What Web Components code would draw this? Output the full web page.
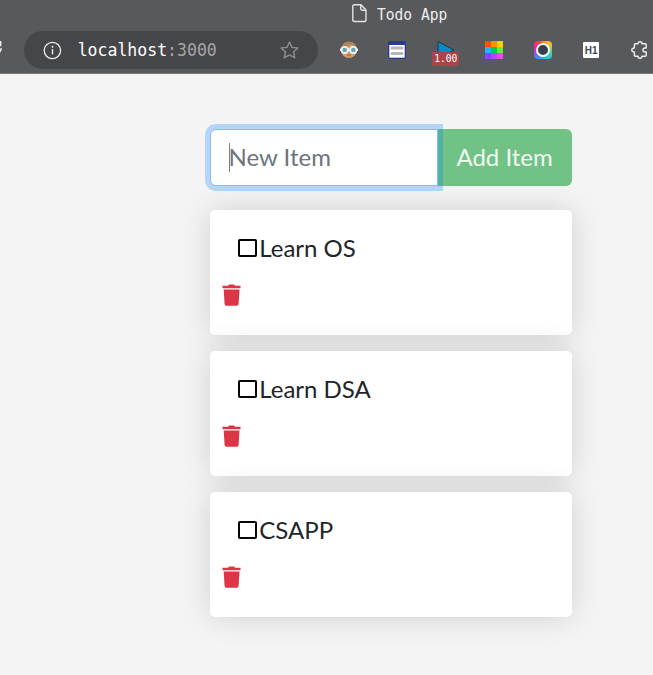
<!DOCTYPE html>
<html lang="en"><head><meta charset="utf-8"><title>Todo App</title>
<style>body{margin:0;background:#f4f4f4;width:653px;height:675px;overflow:hidden;font-family:Lato,sans-serif;color:#212529}</style></head>
<body><todo-page></todo-page>
<script>
function define(name, html){
  customElements.define(name, class extends HTMLElement{
    constructor(){super();this.attachShadow({mode:'open'}).innerHTML=html}
  });
}
define('browser-title',`<style>
:host{display:flex;height:30px;padding-left:352px;gap:10px;box-sizing:border-box;color:#eee;font:14.6px/28px "DejaVu Sans Mono",monospace}
svg{margin-top:4px;flex:none}span{display:block;height:28px;transform:scaleY(1.13);white-space:pre}
</style><svg width="15" height="19" viewBox="0 0 15 19" fill="none" stroke="#e4e4e5" stroke-width="1.4" stroke-linejoin="round"><path d="M2.3 .8H9L14 6V16Q14 17.5 12.5 17.5H2.3Q.8 17.5 .8 16V2.3Q.8 .8 2.3 .8ZM8.8 1V4.8Q8.8 6.2 10.2 6.2H14"/></svg><span><slot></slot></span>`);
define('address-bar',`<style>
:host{display:flex;align-items:center;box-sizing:border-box;width:294px;height:38px;border-radius:19px;background:#454649;padding:0 19px 0 19px;font:16.5px/37px "DejaVu Sans Mono",monospace;color:#fff}
svg{flex:none}p{margin:0 0 0 15.7px;flex:1;height:38px;transform:scaleY(1.1);white-space:pre}i{font-style:normal;color:#a6a6a8}
</style><svg width="19" height="19" viewBox="0 0 19 19"><circle cx="9.4" cy="9.5" r="8.2" fill="none" stroke="#eee" stroke-width="1.3"/><path d="M9.5 8.2V13.4" stroke="#eee" stroke-width="1.4"/><circle cx="9.5" cy="5.8" r=".95" fill="#eee"/></svg>
<p>localhost<i>:3000</i></p><svg width="19" height="18" viewBox="0 0 19 18"><path d="M9.5 1 12 6.4 17.9 7 13.5 11 14.8 16.8 9.5 13.9 4.2 16.8 5.5 11 1.1 7 7 6.4Z" fill="none" stroke="#8c8d90" stroke-width="1.4" stroke-linejoin="round"/></svg>`);
define('extension-icons',`<style>
:host{display:grid;grid-template-columns:repeat(7,48.45px);height:38px;align-items:center;justify-items:center}
svg{display:block;overflow:visible}.play{position:relative;width:20px;height:20px}
b{position:absolute;left:-3.5px;top:11.5px;width:27px;height:14px;border-radius:2px;background:#a94448;color:#fff;font:9.6px/14px "DejaVu Sans Mono",monospace;text-align:center}
b span{display:block;transform:scaleY(1.12)}
.h{width:16px;height:16px;background:#fff;border-radius:1px;color:#45464a;font:bold 10px/17px "Liberation Sans",sans-serif;text-align:center}
.wheel{width:18px;height:18px;border-radius:4px;background:conic-gradient(#ff8a20,#ffbd35 45deg,#39d8a0 110deg,#18c9e5 165deg,#3e8df2 215deg,#b13cf1 255deg,#ff218a 300deg,#ff4a30 340deg,#ff8a20);display:grid;place-items:center}
.wheel:before{content:"";box-sizing:border-box;width:14px;height:14px;border-radius:50%;background:#34404d;border:2px solid #fff}
</style>
<svg width="18" height="18" viewBox="0 0 18 18"><circle cx="9" cy="9" r="8" fill="#d49a6a"/><path d="M1.5 7Q3 0 9 .7 15 0 16.5 7 14 4 11 3.5 6 6 1.5 7Z" fill="#b08458"/><path d="M0 7.5H18V10H0Z" fill="#e8eef0"/><circle cx="4.7" cy="9" r="3.1" fill="#69a6b6" stroke="#edf5f5" stroke-width="1.6"/><circle cx="13.3" cy="9" r="3.1" fill="#69a6b6" stroke="#edf5f5" stroke-width="1.6"/><path d="M7.2 14H10.8" stroke="#9c5540"/></svg>
<svg width="18" height="18" viewBox="0 0 18 18"><rect width="18" height="18" rx="2" fill="#2a3795"/><path d="M1.3 4H16.7V16.7H1.3Z" fill="#fff"/><path d="M4 6.9H14M4 12.6H14" stroke="#b6b6b6" stroke-width="3" stroke-linecap="round"/></svg>
<div class="play"><svg width="20" height="20" viewBox="0 0 20 20"><path d="M2 1.5 18 10 2 18Z" fill="#078cc3" stroke="#27363e"/></svg><b><span>1.00</span></b></div>
<svg width="18" height="18" viewBox="0 0 18 18" shape-rendering="crispEdges"><path fill="#ff5000" d="M0 0h6v6H0z"/><path fill="#ff8d00" d="M6 0h6v6H6z"/><path fill="#ffd000" d="M12 0h6v6h-6z"/><path fill="#20b5ff" d="M0 6h6v6H0z"/><path fill="#08c95a" d="M6 6h6v6H6z"/><path fill="#75df50" d="M12 6h6v6h-6z"/><path fill="#8544ff" d="M0 12h6v6H0z"/><path fill="#b744ff" d="M6 12h6v6H6z"/><path fill="#f044f4" d="M12 12h6v6h-6z"/></svg>
<div class="wheel"></div><div class="h">H1</div>
<svg width="17" height="18" viewBox="0 0 17 18"><path d="M4.5 2.8H7Q7 .8 9 .8T11 2.8H14.3Q15.2 2.8 15.2 3.7V7H14Q12 7 12 9T14 11H15.2V14.3Q15.2 15.2 14.3 15.2H11Q11 17.2 9 17.2T7 15.2H4.5Q3.4 15.2 3.4 14.3V11Q.8 11 .8 9T3.4 7V3.7Q3.4 2.8 4.5 2.8Z" fill="none" stroke="#eee" stroke-width="1.4" stroke-linejoin="round"/></svg>`);
define('browser-chrome',`<style>
:host{display:block;height:74px;box-sizing:border-box;background:#58595d;border-bottom:1px solid #77787a;overflow:hidden}
div{display:flex;height:38px;margin-top:1px}.reload{width:24px;flex:none;margin-top:9px}address-bar{flex:none}extension-icons{margin-left:6.7px;flex:none}
</style><browser-title>Todo App</browser-title><div><svg class="reload" width="24" height="20"><path d="M-5 14.5A7 7 0 0 0 1.2 8.2M.6 1V5.5H-4" fill="none" stroke="#eee" stroke-width="1.6"/></svg><address-bar></address-bar><extension-icons></extension-icons></div>`);
define('todo-form',`<style>
:host{display:flex;height:57px;font-size:24px;line-height:36px}
.input{box-sizing:border-box;width:228.5px;border:1px solid #80bdff;border-radius:6px 0 0 6px;background:#fff;padding:9px 18px 11px;color:#6c757d;box-shadow:0 0 0 5px rgba(0,123,255,.25);position:relative;z-index:1;white-space:pre}
.input:before{content:"";position:absolute;left:18px;top:13px;width:1px;height:29px;background:#7b8084}
button{box-sizing:border-box;flex:1;border:0;border-radius:0 6px 6px 0;background:#71c285;color:#f1f9f3;font:24px/36px Lato,sans-serif;padding:0 1px 2px 0;white-space:nowrap}
</style><div class="input" role="textbox">New Item</div><button>Add Item</button>`);
define('todo-item',`<style>
:host{display:block;height:125px;box-sizing:border-box;background:#fff;border-radius:5px;box-shadow:0 0 30px rgba(0,0,0,.15);padding:20px 12.7px;font-size:24px;line-height:36px}
.row{display:flex;align-items:center;padding-left:16px;height:36px}.row svg{margin-right:2px}.trash{display:block;margin-top:17.6px}
</style><div class="row"><svg width="19" height="18" viewBox="0 0 19 18"><rect x="1" y="1" width="17" height="16" rx=".7" fill="none" stroke="#050505" stroke-width="2"/></svg><slot></slot></div>
<svg class="trash" width="20" height="23" viewBox="0 0 20 23" fill="#dc3545"><path d="M.5 1.8H6L7 .4H12L13 1.8H18.5V4.2H.5ZM1.7 5.5H17.5L16.6 20Q16.5 21.8 14.8 21.8H4.3Q2.8 21.8 2.6 20Z"/></svg>`);
define('todo-page',`<style>
:host{display:block}main{width:362.5px;margin:55px 0 0 209.6px;display:grid;gap:16px}todo-form{margin-bottom:8px}
</style><browser-chrome></browser-chrome><main><todo-form></todo-form><todo-item>Learn OS</todo-item><todo-item>Learn DSA</todo-item><todo-item>CSAPP</todo-item></main>`);
</script></body></html>
